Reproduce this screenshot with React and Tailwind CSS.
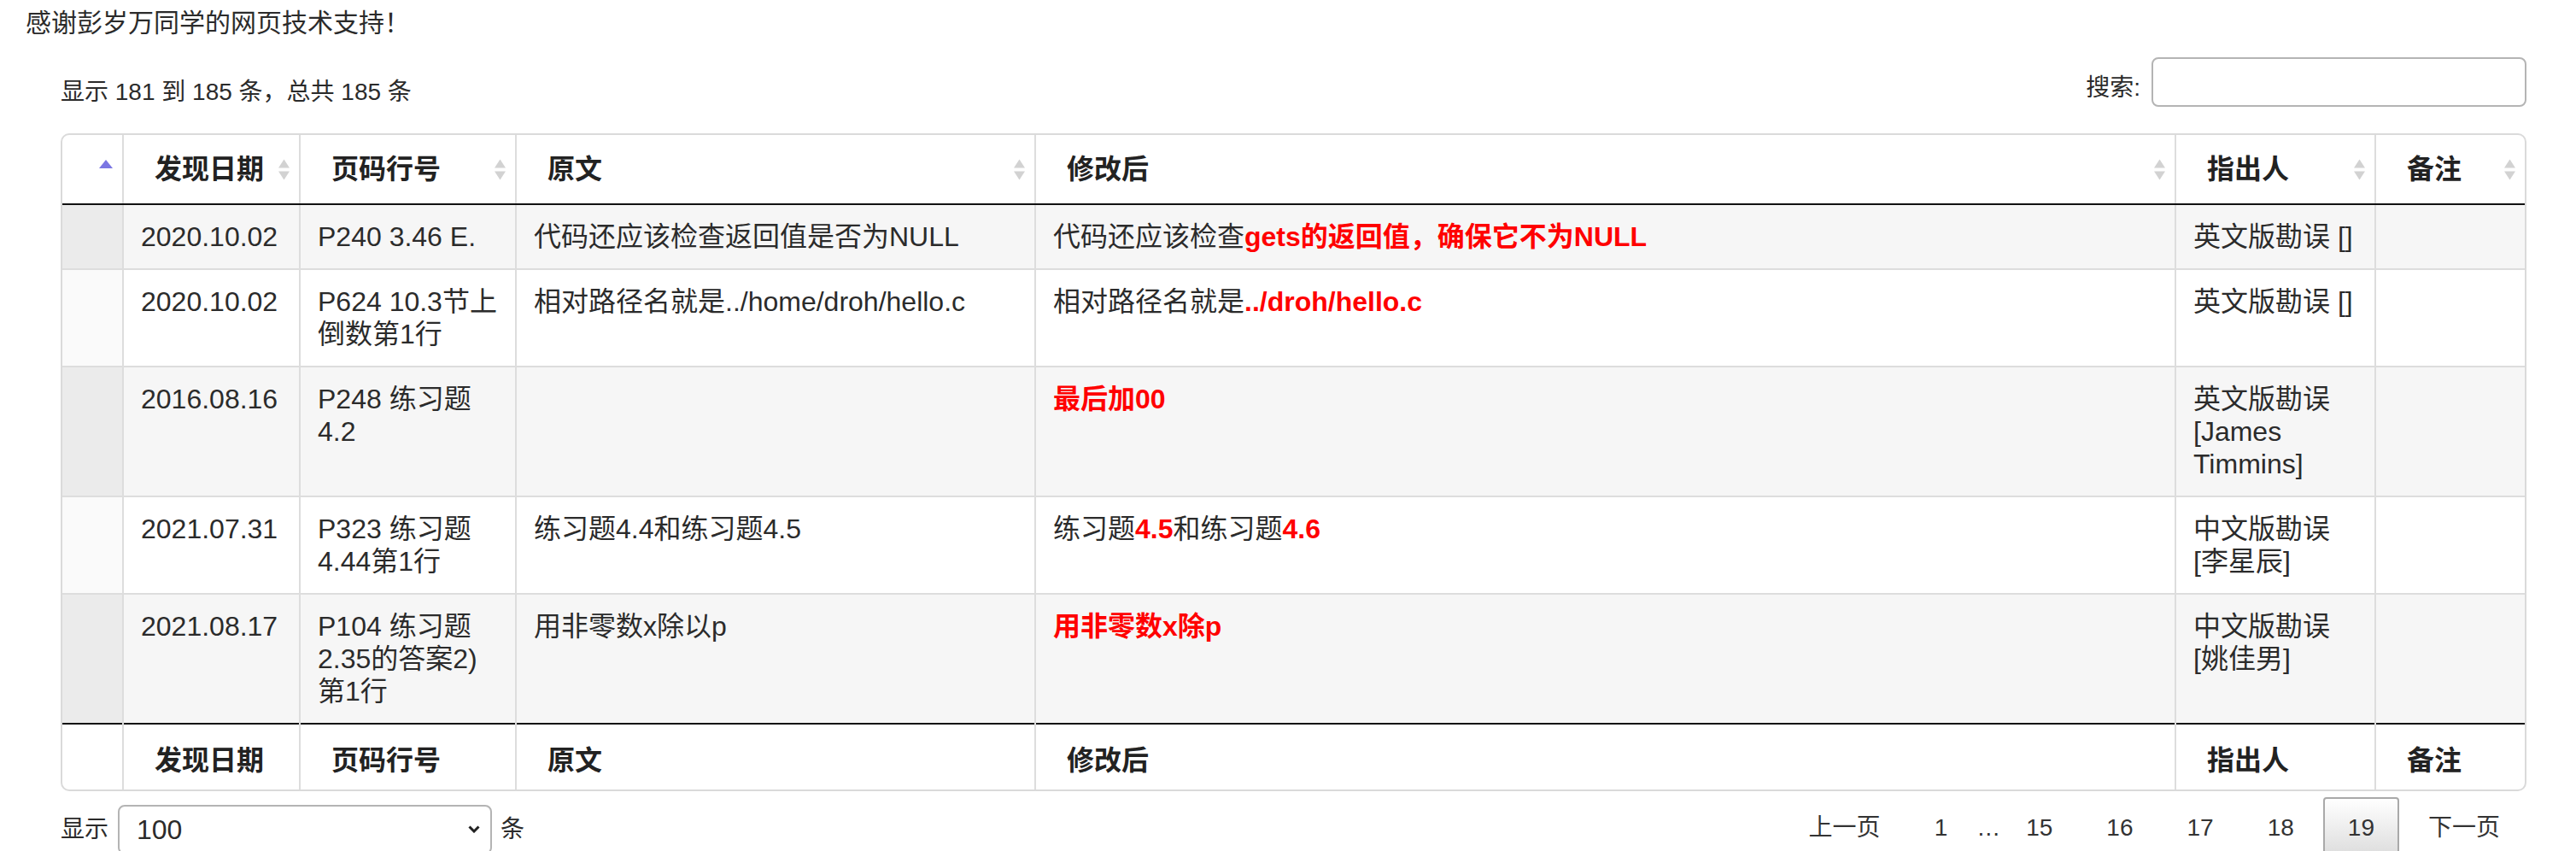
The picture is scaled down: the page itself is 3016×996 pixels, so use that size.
import React from "react";

const R = ({ children }) => (
  <span className="font-bold text-[#ff0000]">{children}</span>
);

function SortBoth() {
  return (
    <svg width="15" height="27" viewBox="0 0 15 27" className="shrink-0">
      <path d="M7.5 1.5 L14 11.5 L1 11.5 Z" fill="#d2d2d2" />
      <path d="M1 15.5 L14 15.5 L7.5 25.5 Z" fill="#d2d2d2" />
    </svg>
  );
}

function SortAsc() {
  return (
    <svg width="16" height="10" viewBox="0 0 16 10" className="shrink-0">
      <path d="M8 0 L16 10 L0 10 Z" fill="#7b76e3" />
    </svg>
  );
}

const rows = [
  {
    d: "2020.10.02",
    p: <>P240 3.46 E.</>,
    o: "代码还应该检查返回值是否为NULL",
    m: (
      <>
        代码还应该检查<R>gets的返回值，确保它不为NULL</R>
      </>
    ),
    w: <>英文版勘误 []</>,
  },
  {
    d: "2020.10.02",
    p: (
      <>
        P624 10.3节上
        <br />
        倒数第1行
      </>
    ),
    o: "相对路径名就是../home/droh/hello.c",
    m: (
      <>
        相对路径名就是<R>../droh/hello.c</R>
      </>
    ),
    w: <>英文版勘误 []</>,
  },
  {
    d: "2016.08.16",
    p: (
      <>
        P248 练习题
        <br />
        4.2
      </>
    ),
    o: "",
    m: <R>最后加00</R>,
    w: (
      <>
        英文版勘误
        <br />
        [James
        <br />
        Timmins]
      </>
    ),
  },
  {
    d: "2021.07.31",
    p: (
      <>
        P323 练习题
        <br />
        4.44第1行
      </>
    ),
    o: "练习题4.4和练习题4.5",
    m: (
      <>
        练习题<R>4.5</R>和练习题<R>4.6</R>
      </>
    ),
    w: (
      <>
        中文版勘误
        <br />
        [李星辰]
      </>
    ),
  },
  {
    d: "2021.08.17",
    p: (
      <>
        P104 练习题
        <br />
        2.35的答案2)
        <br />
        第1行
      </>
    ),
    o: "用非零数x除以p",
    m: <R>用非零数x除p</R>,
    w: (
      <>
        中文版勘误
        <br />
        [姚佳男]
      </>
    ),
  },
];

const heads = ["发现日期", "页码行号", "原文", "修改后", "指出人", "备注"];

export default function App() {
  return (
    <div className="w-[3016px] h-[996px] overflow-hidden bg-white text-[#2b2b2b] font-['Liberation_Sans','Noto_Sans_CJK_SC',sans-serif]">
      <p className="pl-[30px] pt-[8px] text-[30px] leading-[38px]">
        感谢彭岁万同学的网页技术支持！
      </p>

      <div className="ml-[71px] w-[2887px]">
        <div className="flex justify-between mt-[21px] h-[58px]">
          <div className="text-[28px] leading-[38px] pt-[22px]">
            显示 181 到 185 条，总共 185 条
          </div>
          <div className="flex">
            <span className="text-[28px] leading-[38px] pt-[17px] mr-[13px]">
              搜索:
            </span>
            <div className="w-[439px] h-[58px] rounded-[8px] border-2 border-[#b4b4b4] bg-white" />
          </div>
        </div>

        <div className="mt-[31px] rounded-[10px] border-2 border-[#dadada] overflow-hidden">
          <table className="w-full table-fixed border-collapse text-[32px] leading-[38px]">
            <colgroup>
              <col className="w-[71px]" />
              <col className="w-[207px]" />
              <col className="w-[253px]" />
              <col className="w-[608px]" />
              <col className="w-[1335px]" />
              <col className="w-[234px]" />
              <col className="w-[175px]" />
            </colgroup>
            <thead>
              <tr>
                <th className="border-b-2 border-[#111] py-[20px] pr-[11px] leading-[40px]">
                  <div className="flex justify-end items-start h-[40px] pt-[9px]">
                    <SortAsc />
                  </div>
                </th>
                {heads.map((h) => (
                  <th
                    key={h}
                    className="border-b-2 border-b-[#111] border-l-2 border-l-[#dddddd] py-[20px] pl-[36px] pr-[10px] text-left font-bold text-[#222] leading-[40px]"
                  >
                    <div className="flex justify-between items-center">
                      <span>{h}</span>
                      <SortBoth />
                    </div>
                  </th>
                ))}
              </tr>
            </thead>
            <tbody>
              {rows.map((r, i) => {
                const odd = i % 2 === 0;
                const top = i === 0 ? "" : "border-t-2 border-t-[#dddddd]";
                const cell = "align-top py-[18px] px-[20px] border-l-2 border-l-[#dddddd]";
                return (
                  <tr key={i} className={odd ? "bg-[#f6f6f6]" : "bg-white"}>
                    <td className={`${top} ${odd ? "bg-[#ebebeb]" : "bg-[#fafafa]"}`} />
                    <td className={`${top} ${cell} whitespace-nowrap`}>{r.d}</td>
                    <td className={`${top} ${cell} whitespace-nowrap`}>{r.p}</td>
                    <td className={`${top} ${cell}`}>{r.o}</td>
                    <td className={`${top} ${cell}`}>{r.m}</td>
                    <td className={`${top} ${cell} whitespace-nowrap`}>{r.w}</td>
                    <td className={`${top} ${cell}`} />
                  </tr>
                );
              })}
            </tbody>
            <tfoot>
              <tr>
                <th className="border-t-2 border-[#111]" />
                {heads.map((h) => (
                  <th
                    key={h}
                    className="border-t-2 border-t-[#111] border-l-2 border-l-[#dddddd] pt-[23px] pb-[15px] pl-[36px] text-left font-bold text-[#222] leading-[38px]"
                  >
                    {h}
                  </th>
                ))}
              </tr>
            </tfoot>
          </table>
        </div>

        <div className="flex justify-between">
          <div className="flex items-center mt-[10px] text-[28px] leading-[38px]">
            <span>显示</span>
            <div className="ml-[11px] w-[438px] h-[58px] rounded-[8px] border-2 border-[#b4b4b4] flex items-center justify-between pl-[20px] pr-[12px] text-[32px]">
              <span>100</span>
              <svg width="14" height="9" viewBox="0 0 14 9">
                <polyline points="1.5,1.5 7,7 12.5,1.5" fill="none" stroke="#222" strokeWidth="3" />
              </svg>
            </div>
            <span className="ml-[10px]">条</span>
          </div>

          <div className="flex items-start mt-[7px] gap-[5px] mr-[2px] text-[28px] leading-[40px] text-[#333]">
            <span className="px-[27px] py-[14px] border-2 border-transparent">上一页</span>
            <span className="px-[27px] py-[14px] border-2 border-transparent">1</span>
            <span className="w-[24px] py-[16px] text-center">…</span>
            <span className="px-[27px] py-[14px] border-2 border-transparent">15</span>
            <span className="px-[27px] py-[14px] border-2 border-transparent">16</span>
            <span className="px-[27px] py-[14px] border-2 border-transparent">17</span>
            <span className="px-[27px] py-[14px] border-2 border-transparent">18</span>
            <span className="px-[27px] py-[14px] border-2 border-[#a9a9a9] rounded-[4px] bg-gradient-to-b from-white to-[#dcdcdc]">19</span>
            <span className="px-[27px] py-[14px] border-2 border-transparent">下一页</span>
          </div>
        </div>
      </div>
    </div>
  );
}
